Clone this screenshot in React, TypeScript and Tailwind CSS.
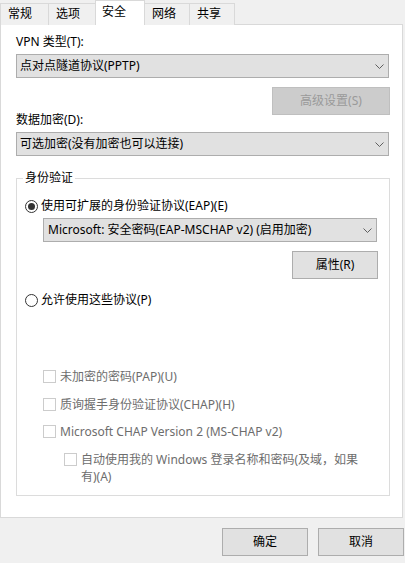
import React from 'react';

const font = {
  fontFamily: '"Noto Sans", "Noto Sans CJK SC", sans-serif',
};

function Chevron() {
  return (
    <svg width="9" height="5" viewBox="0 0 9 5" className="shrink-0">
      <path d="M0.5 0.5 L4.5 4.5 L8.5 0.5" fill="none" stroke="#5f5f5f" strokeWidth="1" />
    </svg>
  );
}

function Select({ text, className }: { text: string; className: string }) {
  return (
    <div
      className={`h-[24px] flex items-center justify-between bg-[#e1e1e1] border border-[#adadad] pl-[3px] pr-[4px] text-black leading-[16px] ${className}`}
    >
      <span>{text}</span>
      <Chevron />
    </div>
  );
}

function Button({ text, className, disabled }: { text: string; className: string; disabled?: boolean }) {
  return (
    <div
      className={`h-[28px] flex items-center justify-center border leading-[16px] ${
        disabled ? 'bg-[#cccccc] border-[#bfbfbf] text-[#9a9a9a]' : 'bg-[#e1e1e1] border-[#adadad] text-black'
      } ${className}`}
    >
      {text}
    </div>
  );
}

function Radio({ checked, label }: { checked?: boolean; label: string }) {
  return (
    <div className="flex items-center h-[16px] leading-[16px]">
      <div className="w-[13px] h-[13px] rounded-full border border-[#333333] bg-white flex items-center justify-center">
        {checked && <div className="w-[7px] h-[7px] rounded-full bg-[#333333]" />}
      </div>
      <span className="ml-[3px] text-black">{label}</span>
    </div>
  );
}

function Check({ label, className }: { label: React.ReactNode; className: string }) {
  return (
    <div className={`flex items-start leading-[17px] text-[#6d6d6d] ${className}`}>
      <div className="w-[13px] h-[13px] mt-[2px] border border-[#cccccc] bg-white shrink-0" />
      <span className="ml-[4px]">{label}</span>
    </div>
  );
}

const tabs = [
  { name: '常规', w: 'w-[49px]' },
  { name: '选项', w: 'w-[48px]' },
  { name: '安全', w: 'w-[50px]', active: true },
  { name: '网络', w: 'w-[46px]' },
  { name: '共享', w: 'w-[46px]' },
];

export default function App() {
  return (
    <div className="w-[405px] h-[563px] bg-[#f0f0f0] text-[12px] overflow-hidden" style={font}>
      {/* 标签页 */}
      <div className="flex items-end h-[25px] relative z-10">
        {tabs.map((t) =>
          t.active ? (
            <div
              key={t.name}
              className={`${t.w} h-[25px] -ml-px first:ml-0 bg-white border border-b-0 border-[#d9d9d9] pl-[6px] pt-[3px] leading-[16px] text-black`}
            >
              {t.name}
            </div>
          ) : (
            <div
              key={t.name}
              className={`${t.w} h-[22px] -ml-px first:ml-0 bg-[#f0f0f0] border border-b-0 border-[#d9d9d9] pl-[7px] pt-[2px] leading-[16px] text-black`}
            >
              {t.name}
            </div>
          ),
        )}
      </div>

      {/* 面板 */}
      <div className="w-[403px] h-[494px] -mt-px bg-white border border-[#d9d9d9] pl-[15px] pt-[9px]">
        <div className="h-[16px] leading-[16px] text-black">VPN 类型(T):</div>
        <Select text="点对点隧道协议(PPTP)" className="w-[373px] mt-[4px]" />
        <div className="flex justify-end w-[374px] mt-[9px]">
          <Button text="高级设置(S)" className="w-[118px]" disabled />
        </div>
        <div className="h-[16px] leading-[16px] text-black -mt-[3px]">数据加密(D):</div>
        <Select text="可选加密(没有加密也可以连接)" className="w-[373px] mt-[4px]" />

        {/* 身份验证 */}
        <div className="relative w-[374px] h-[318px] mt-[22px] border border-[#dcdcdc] pl-[8px] pt-[19px]">
          <div className="absolute -top-[9px] left-[6px] bg-white px-[2px] leading-[16px] text-black">身份验证</div>
          <Radio checked label="使用可扩展的身份验证协议(EAP)(E)" />
          <Select text="Microsoft: 安全密码(EAP-MSCHAP v2) (启用加密)" className="w-[334px] mt-[4px] ml-[18px] pl-[4px]" />
          <Button text="属性(R)" className="w-[86px] mt-[9px] ml-[267px]" />
          <div className="mt-[13px]">
            <Radio label="允许使用这些协议(P)" />
          </div>
          <Check label="未加密的密码(PAP)(U)" className="ml-[18px] mt-[60px]" />
          <Check label="质询握手身份验证协议(CHAP)(H)" className="ml-[18px] mt-[11px]" />
          <Check label="Microsoft CHAP Version 2 (MS-CHAP v2)" className="ml-[18px] mt-[10px]" />
          <Check
            label={
              <>
                自动使用我的 Windows 登录名称和密码(及域，如果
                <br />
                有)(A)
              </>
            }
            className="ml-[39px] mt-[11px]"
          />
        </div>
      </div>

      {/* 底部按钮 */}
      <div className="flex justify-end gap-[10px] pr-[1px] mt-[10px]">
        <Button text="确定" className="w-[86px]" />
        <Button text="取消" className="w-[86px]" />
      </div>
    </div>
  );
}
